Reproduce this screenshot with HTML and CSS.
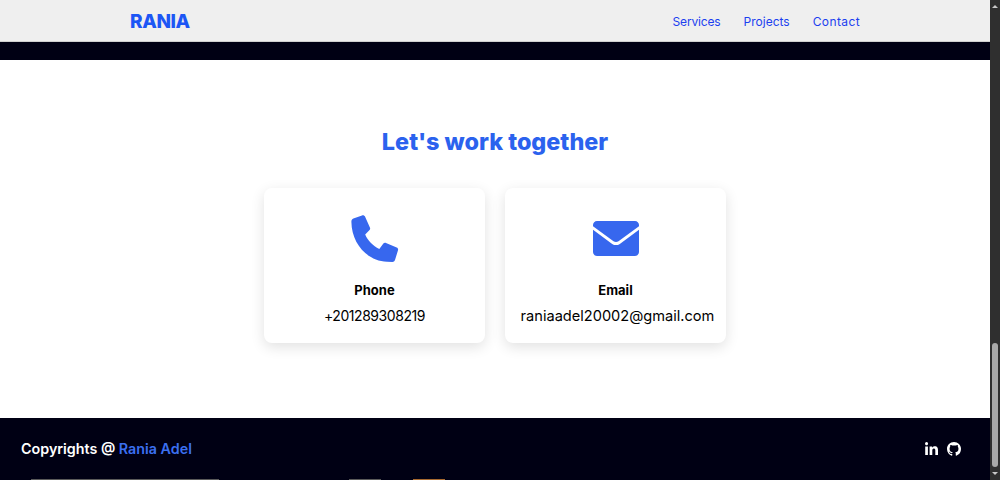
FILE: index.html
```html
<!DOCTYPE html>
<html lang="en">
<head>
    <meta charset="UTF-8">
    <title>Rania Adel</title>
    <link rel="stylesheet" href="styles.css">
</head>
<body>

<div class="page">
    <div class="content">
        <nav class="navbar">
            <a href="#" class="logo">RANIA</a>
            <div class="nav-links">
                <a href="#" class="nav-services">Services</a>
                <a href="#">Projects</a>
                <a href="#" class="nav-contact">Contact</a>
            </div>
        </nav>
        <div class="dark-strip"></div>

        <section class="contact">
            <h2>Let's work together</h2>
            <div class="cards">
                <div class="card">
                    <svg class="card-icon" viewBox="0 0 48 48" width="48" height="48">
                        <path fill="#3767ee" d="M2.400 3.600 11 .4C12.300-.1 13.500.5 14 1.600L18.900 12.400C19.400 13.400 19.200 14.400 18.300 15.200L14.200 19.600C16.500 25.500 22 31 28.300 34L32 29C32.700 28 33.900 27.600 35 28L45.700 32.500C46.800 33 47.400 34.200 47 35.300L44 45C43.600 46.200 42.600 46.900 41.400 46.900L36 46.800C15.800 46 .6 28 .4 7 .3 5.400 1 4.100 2.400 3.600Z"/>
                    </svg>
                    <h3>Phone</h3>
                    <p class="phone-number">+201289308219</p>
                </div>
                <div class="card">
                    <svg class="card-icon" viewBox="0 0 48 48" width="48" height="48">
                        <path fill="#3767ee" d="M5 6h38c2.200 0 4 1.800 4 4v1.200L26.500 26.200c-1.500 1.100-3.500 1.100-5 0L1 11.200V10c0-2.200 1.800-4 4-4Z"/>
                        <path fill="#3767ee" d="M1 14.800 20.200 28.900c2.300 1.600 5.300 1.600 7.600 0L47 14.800V37c0 2.200-1.800 4-4 4H5c-2.200 0-4-1.800-4-4Z"/>
                    </svg>
                    <h3>Email</h3>
                    <p class="email-address">raniaadel20002@gmail.com</p>
                </div>
            </div>
        </section>

        <footer class="footer">
            <div class="footer-row">
                <span class="copy">Copyrights @ <a href="#">Rania Adel</a></span>
                <div class="social">
                    <svg viewBox="0 0 448 512" width="13" height="15">
                        <path fill="#fff" d="M100.300 448H7.400V148.900h92.900zM53.800 108.100C24.100 108.100 0 83.500 0 53.800a53.800 53.800 0 0 1 107.600 0c0 29.700-24.100 54.300-53.800 54.300zM447.900 448h-92.700V302.400c0-34.700-.7-79.200-48.300-79.200-48.300 0-55.700 37.700-55.700 76.700V448h-92.800V148.900h89.100v40.800h1.300c12.400-23.500 42.700-48.300 87.900-48.300 94 0 111.300 61.900 111.300 142.300V448z"/>
                    </svg>
                    <svg viewBox="0 0 16 16" width="14" height="14">
                        <path fill="#fff" d="M8 0C3.580 0 0 3.580 0 8c0 3.540 2.290 6.530 5.470 7.590.4.070.55-.17.55-.38 0-.19-.01-.82-.01-1.490-2.010.37-2.530-.49-2.690-.94-.09-.23-.48-.94-.82-1.130-.28-.15-.68-.52-.01-.53.630-.01 1.080.58 1.230.82.720 1.210 1.870.87 2.330.66.070-.52.280-.87.510-1.070-1.780-.2-3.640-.89-3.640-3.950 0-.87.310-1.590.820-2.150-.08-.2-.36-1.020.08-2.120 0 0 .67-.21 2.200.82.640-.18 1.320-.27 2-.27s1.360.09 2 .27c1.530-1.040 2.200-.82 2.200-.82.440 1.100.16 1.920.08 2.120.51.560.82 1.270.82 2.150 0 3.070-1.870 3.750-3.650 3.950.29.250.54.730.54 1.480 0 1.070-.01 1.930-.01 2.200 0 .21.150.46.550.38A8.010 8.010 0 0 0 16 8c0-4.420-3.580-8-8-8z"/>
                    </svg>
                </div>
            </div>
            <div class="edge-strip">
                <span class="edge-wide"></span>
                <span class="edge-small"></span>
                <span class="edge-orange"></span>
            </div>
        </footer>
    </div>

    <div class="scrollbar">
        <span class="arrow-up"></span>
        <div class="track"><div class="thumb"></div></div>
        <span class="arrow-down"></span>
    </div>
</div>

</body>
</html>
```

FILE: styles.css
```css
html, body {
    margin: 0;
    padding: 0;
}
body {
    font-family: Inter, "Open Sans", sans-serif;
    background-color: #fff;
    color: #000;
    overflow: hidden;
}
a {
    text-decoration: none;
}
.page {
    display: flex;
    width: 1000px;
    height: 480px;
    overflow: hidden;
}
.content {
    width: 990px;
    display: flex;
    flex-direction: column;
}

/* navbar */
.navbar {
    height: 40px;
    flex-shrink: 0;
    display: flex;
    align-items: center;
    justify-content: space-between;
    padding: 1px 130px 0;
    background-color: #efefef;
    border-bottom: 1px solid #d0d0d0;
}
.logo {
    font-size: 19px;
    font-weight: 800;
    letter-spacing: -0.4px;
    color: #1c56f5;
}
.nav-links {
    display: flex;
    gap: 23px;
}
.nav-links a {
    font-size: 12px;
    color: #1c3ff0;
}
.nav-links .nav-services {
    letter-spacing: -0.15px;
}
.nav-links .nav-contact {
    letter-spacing: 0.4px;
}
.dark-strip {
    height: 18px;
    flex-shrink: 0;
    background-color: #000014;
}

/* contact section */
.contact {
    height: 358px;
    flex-shrink: 0;
    display: flex;
    flex-direction: column;
    align-items: center;
    padding-top: 67px;
    box-sizing: border-box;
}
.contact h2 {
    margin: 0;
    font-size: 23.400px;
    line-height: 30px;
    font-weight: 800;
    color: #2b62ee;
}
.cards {
    display: flex;
    gap: 19.500px;
    margin-top: 31px;
}
.card {
    width: 221.500px;
    height: 155px;
    box-sizing: border-box;
    padding-top: 27px;
    display: flex;
    flex-direction: column;
    align-items: center;
    background-color: #fff;
    border-radius: 8px;
    box-shadow: 0 4px 14px rgba(0, 0, 0, 0.12);
}
.card-icon {
    flex-shrink: 0;
}
.card h3 {
    margin: 17px 0 0;
    font-size: 13px;
    line-height: 20px;
    font-weight: 700;
}
.card p {
    margin: 6px 0 0;
    line-height: 20px;
    white-space: nowrap;
}
.phone-number {
    font-size: 14px;
    letter-spacing: -0.45px;
}
.card .email-address {
    font-size: 14.600px;
    padding-left: 4px;
}

/* footer */
.footer {
    flex: 1;
    display: flex;
    flex-direction: column;
    justify-content: space-between;
    background-color: #000014;
}
.footer-row {
    display: flex;
    align-items: center;
    justify-content: space-between;
    padding: 21px 29px 0 21px;
}
.copy {
    font-size: 14.300px;
    line-height: 20px;
    font-weight: 600;
    color: #fff;
}
.copy a {
    color: #3b6ff0;
}
.social {
    display: flex;
    align-items: center;
    gap: 9px;
    height: 20px;
}

/* sliver of whatever sits under the page at the bottom edge */
.edge-strip {
    display: flex;
    height: 1px;
    padding-left: 31px;
}
.edge-wide {
    width: 188px;
    background-color: #5a5a5a;
}
.edge-small {
    width: 32px;
    margin-left: 130px;
    background-color: #5a5a5a;
}
.edge-orange {
    width: 32px;
    margin-left: 32px;
    background-color: #a86a30;
}

/* scrollbar */
.scrollbar {
    width: 10px;
    background-color: #2f2f2f;
    display: flex;
    flex-direction: column;
    align-items: center;
}
.track {
    flex: 1;
    width: 100%;
    position: relative;
}
.thumb {
    position: absolute;
    left: 2px;
    right: 2px;
    top: 330px;
    bottom: 0;
    border-radius: 3px;
    background-color: #a8a8a8;
}
.arrow-up, .arrow-down {
    width: 0;
    height: 0;
    margin: 5px 0;
    border-left: 3px solid transparent;
    border-right: 3px solid transparent;
}
.arrow-up {
    border-bottom: 3px solid #c8c8c8;
}
.arrow-down {
    border-top: 3px solid #c8c8c8;
}
```
